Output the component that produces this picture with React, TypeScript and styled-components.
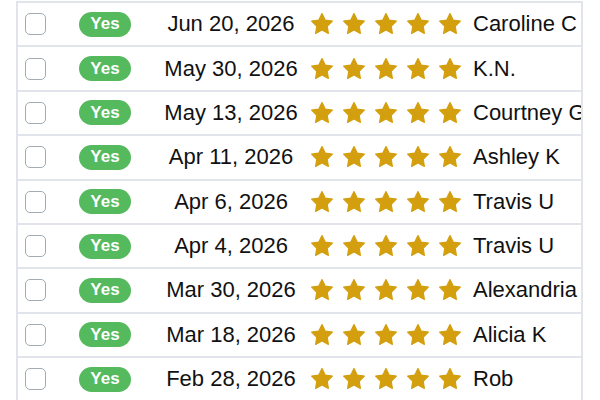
import React from "react";
import styled, { createGlobalStyle } from "styled-components";

const Global = createGlobalStyle`
  html, body { margin: 0; padding: 0; background: #ffffff; }
  body { font-family: "Liberation Sans", Arial, sans-serif; color: #111; overflow: hidden; }
`;

const Table = styled.div`
  margin: 1px 0 0 16px;
  width: 567px;
  border-left: 2px solid #e1e4ea;
  border-right: 2px solid #e1e4ea;
  border-top: 2px solid #e1e4ea;
  box-sizing: border-box;
`;

const Row = styled.div`
  display: flex;
  align-items: center;
  height: 44.375px;
  box-sizing: border-box;
  border-bottom: 2px solid #e1e4ea;
`;

const CheckCell = styled.div`
  width: 44px;
  flex: none;
  display: flex;
  align-items: center;
  padding-left: 7px;
  box-sizing: border-box;
`;

const Checkbox = styled.div`
  width: 21px;
  height: 22px;
  box-sizing: border-box;
  border: 1.5px solid #a3abb5;
  border-radius: 5px;
  background: #fff;
`;

const PillCell = styled.div`
  width: 86px;
  flex: none;
  display: flex;
  justify-content: center;
`;

const Pill = styled.span`
  display: inline-flex;
  align-items: center;
  justify-content: center;
  width: 52px;
  height: 25px;
  border-radius: 12.5px;
  background: #55b95d;
  color: #fff;
  font-weight: 700;
  font-size: 17px;
`;

const DateCell = styled.div`
  width: 162px;
  flex: none;
  padding-left: 4px;
  box-sizing: border-box;
  text-align: center;
  font-size: 22px;
  white-space: nowrap;
`;

const Stars = styled.div`
  flex: none;
  display: flex;
  gap: 8px;
`;

const NameCell = styled.div`
  flex: 1;
  min-width: 0;
  padding-left: 11px;
  font-size: 22px;
  white-space: nowrap;
  overflow: hidden;
`;

const Star = () => (
  <svg width="24" height="24" viewBox="0 0 24 24">
    <polygon
      points="12,1.6 15.2,8.1 22.4,9.1 17.2,14.2 18.4,21.4 12,18 5.6,21.4 6.8,14.2 1.6,9.1 8.8,8.1"
      fill="#d39f0e"
      stroke="#d39f0e"
      strokeWidth="1.2"
      strokeLinejoin="round"
    />
  </svg>
);

const rows = [
  ["Jun 20, 2026", "Caroline C"],
  ["May 30, 2026", "K.N."],
  ["May 13, 2026", "Courtney G"],
  ["Apr 11, 2026", "Ashley K"],
  ["Apr 6, 2026", "Travis U"],
  ["Apr 4, 2026", "Travis U"],
  ["Mar 30, 2026", "Alexandria"],
  ["Mar 18, 2026", "Alicia K"],
  ["Feb 28, 2026", "Rob"],
];

export default function App() {
  return (
    <>
      <Global />
      <Table>
        {rows.map(([date, name], i) => (
          <Row key={i}>
            <CheckCell>
              <Checkbox />
            </CheckCell>
            <PillCell>
              <Pill>Yes</Pill>
            </PillCell>
            <DateCell>{date}</DateCell>
            <Stars>
              {[0, 1, 2, 3, 4].map((s) => (
                <Star key={s} />
              ))}
            </Stars>
            <NameCell>{name}</NameCell>
          </Row>
        ))}
      </Table>
    </>
  );
}
